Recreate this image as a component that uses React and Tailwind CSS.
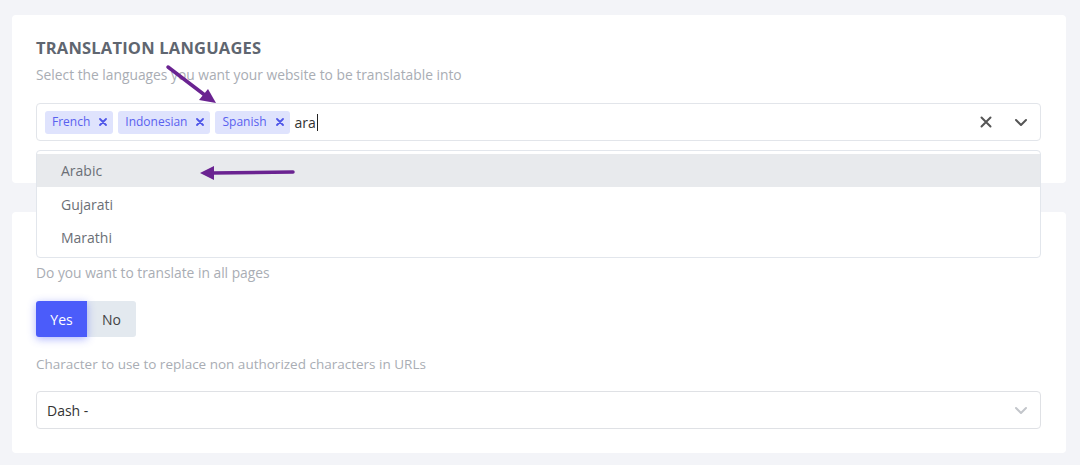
import React from 'react';

const font = { fontFamily: '"Open Sans", "Noto Sans", sans-serif' };

const Chip = ({ label }) => (
  <span className="flex items-center h-[23px] pl-[7px] pr-[6px] rounded-[3px] bg-[#dfe3fd] text-[#5961ef] text-[12px]">
    {label}
    <svg className="ml-[9px]" width="8" height="8" viewBox="0 0 8 8">
      <path d="M1 1L7 7M7 1L1 7" stroke="#4f56e8" strokeWidth="1.8" strokeLinecap="round" />
    </svg>
  </span>
);

const Chevron = ({ color = '#555' }) => (
  <svg width="14" height="9" viewBox="0 0 14 9">
    <path d="M2 2L7 7L12 2" fill="none" stroke={color} strokeWidth="2" strokeLinecap="round" strokeLinejoin="round" />
  </svg>
);

export default function App() {
  return (
    <div className="relative w-[1080px] h-[465px] bg-[#f3f4f8] overflow-hidden" style={font}>
      <div className="pt-[15px] pl-[12px] w-[1066px] flex flex-col gap-[29px]">
        <section className="bg-white rounded-[4px] h-[168px] px-[24px] pt-[22px]">
          <h2 className="text-[16.5px] font-bold text-[#5f6670] tracking-[0.2px] leading-[22px]">TRANSLATION LANGUAGES</h2>
          <p className="mt-[6px] text-[13.8px] text-[#a9adb4] leading-[20px]">
            Select the languages you want your website to be translatable into
          </p>
          <div className="mt-[18px] w-[1005px] h-[38px] border border-[#e2e5ea] rounded-[4px] flex items-center pl-[8px] pr-[12px]">
            <div className="flex items-center gap-[5px] flex-1">
              <Chip label="French" />
              <Chip label="Indonesian" />
              <Chip label="Spanish" />
              <span className="text-[14px] text-[#333] flex items-center">
                ara<span className="inline-block w-[1px] h-[17px] bg-[#222] ml-[1px]" />
              </span>
            </div>
            <svg width="12" height="12" viewBox="0 0 12 12" className="mr-[22px]">
              <path d="M1.5 1.5L10.5 10.5M10.5 1.5L1.5 10.5" stroke="#555" strokeWidth="2" strokeLinecap="round" />
            </svg>
            <Chevron />
          </div>
        </section>

        <section className="bg-white rounded-[4px] h-[241px] px-[24px] pt-[51px]">
          <p className="text-[13.8px] text-[#a9adb4] leading-[20px]">Do you want to translate in all pages</p>
          <div className="mt-[18px] flex">
            <button className="w-[51px] h-[36px] bg-[#4b5cfa] text-white text-[14px] rounded-l-[3px] shadow-[0_2px_8px_rgba(75,92,250,0.45)] relative z-10">Yes</button>
            <button className="w-[49px] h-[36px] bg-[#e3e9ef] text-[#444] text-[14px] rounded-r-[3px]">No</button>
          </div>
          <p className="mt-[17px] text-[13.5px] text-[#a9adb4] leading-[20px]">
            Character to use to replace non authorized characters in URLs
          </p>
          <div className="mt-[17px] w-[1005px] h-[38px] border border-[#dfe1e5] rounded-[4px] flex items-center justify-between pl-[10px] pr-[12px]">
            <span className="text-[14px] text-[#333]">Dash -</span>
            <Chevron color="#c3c6cb" />
          </div>
        </section>
      </div>

      {/* open dropdown menu */}
      <div className="absolute left-[36px] top-[150px] w-[1005px] h-[108px] bg-white border border-[#e2e6ec] rounded-[4px] py-[3px] z-20">
        <div className="h-[33px] bg-[#e8eaed] flex items-center pl-[24px] text-[14px] text-[#6b6f76]">Arabic</div>
        <div className="h-[34px] flex items-center pl-[24px] text-[14px] text-[#6b6f76]">Gujarati</div>
        <div className="h-[33px] flex items-center pl-[24px] text-[14px] text-[#6b6f76]">Marathi</div>
      </div>

      {/* annotation arrows */}
      <svg className="absolute left-0 top-0 z-30 pointer-events-none" width="1080" height="465">
        <g stroke="#6a2391" strokeWidth="3.5" strokeLinecap="round" fill="#6a2391">
          <line x1="168" y1="67" x2="206" y2="96" />
          <polygon points="216,103 199,100 208,89" stroke="none" />
          <line x1="293" y1="172" x2="212" y2="173" />
          <polygon points="200,173 214,166 214,180" stroke="none" />
        </g>
      </svg>
    </div>
  );
}
